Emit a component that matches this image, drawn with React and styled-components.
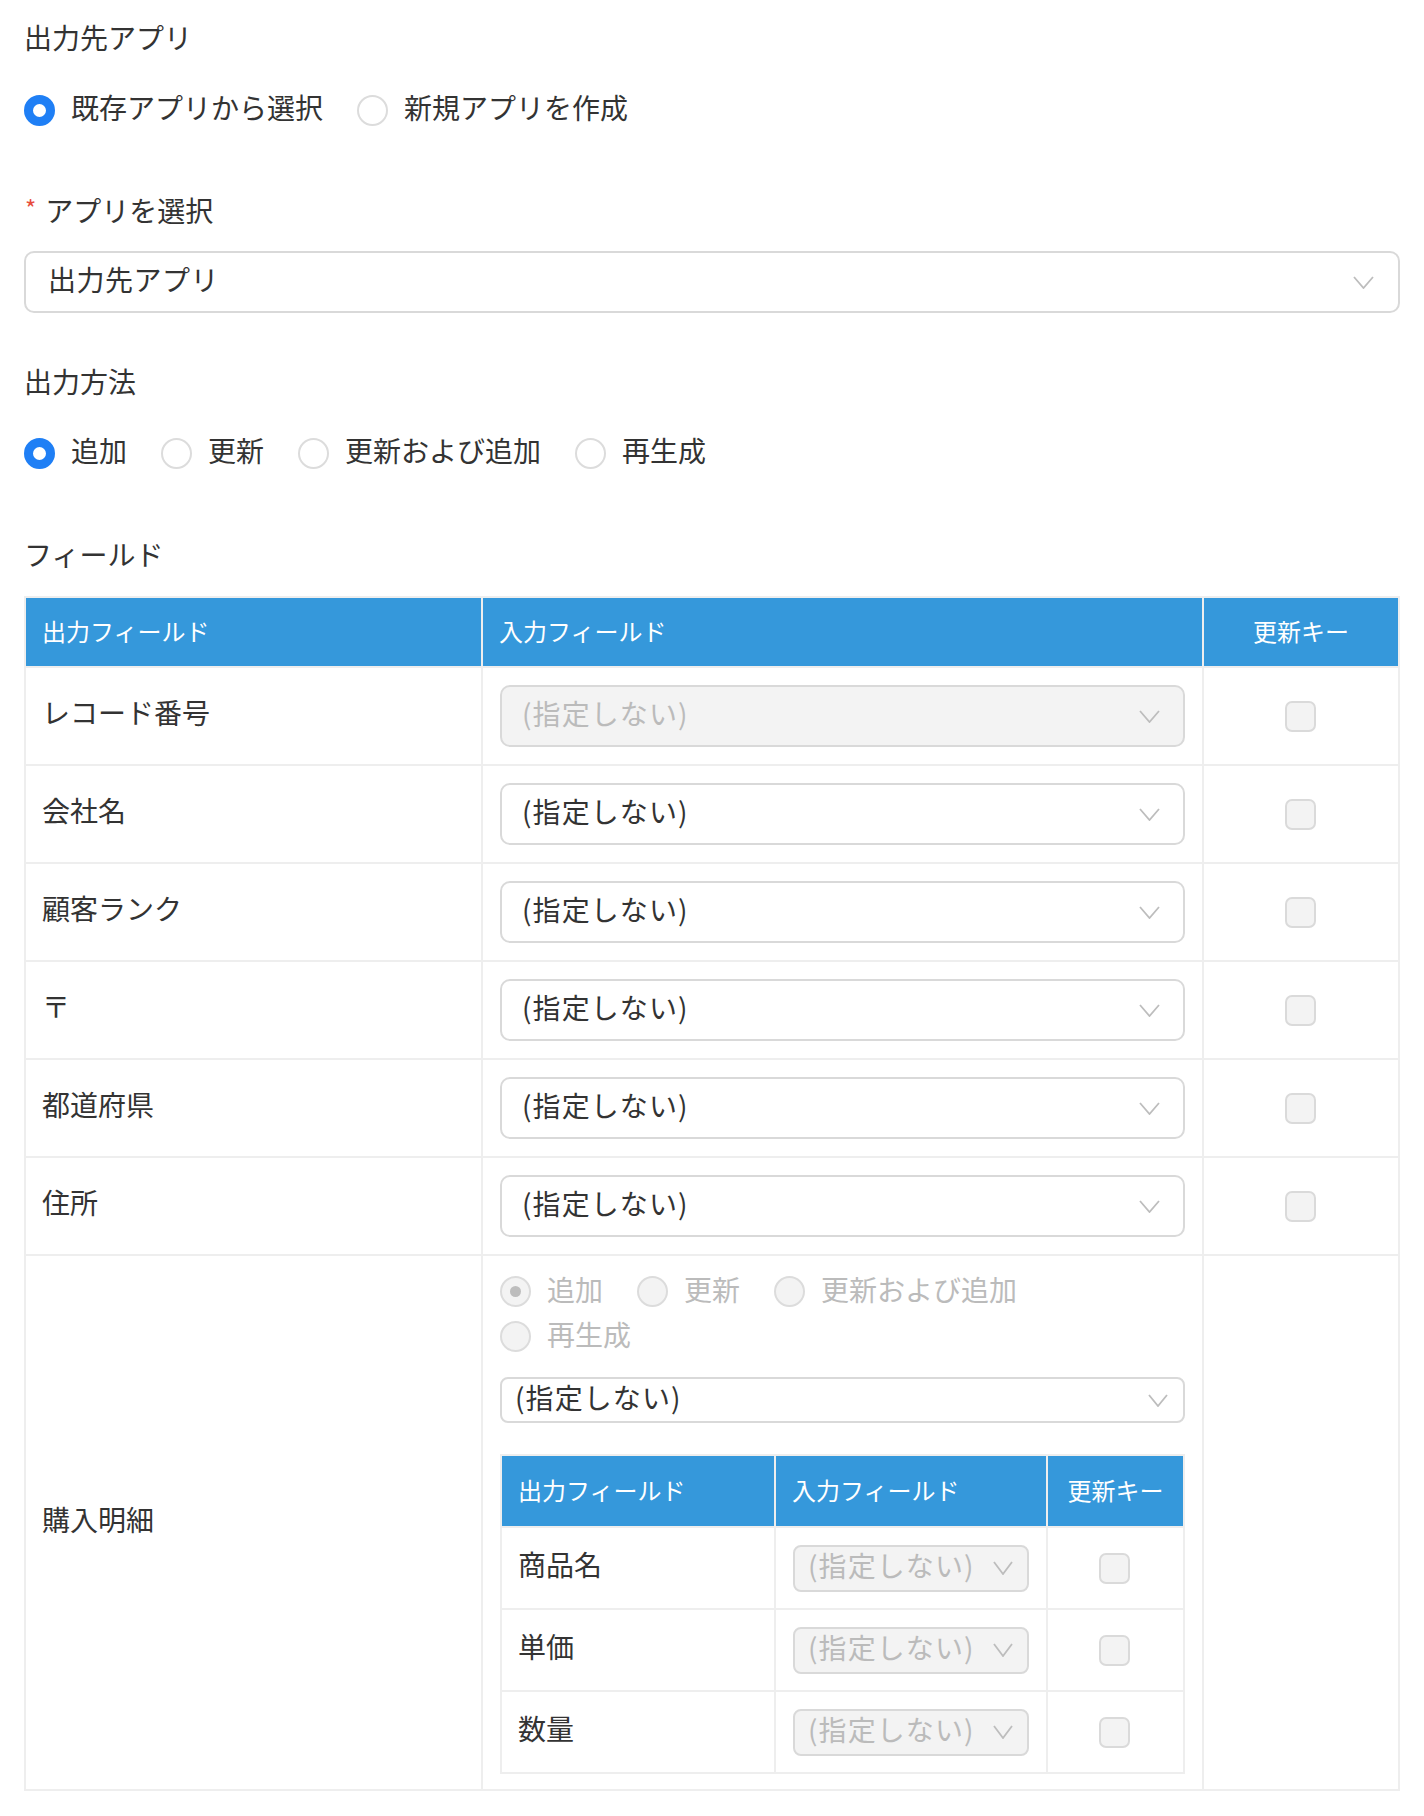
import React from 'react';
import styled, { createGlobalStyle } from 'styled-components';

const GlobalStyle = createGlobalStyle`
  body {
    margin: 0;
    background: #fff;
    color: #333;
    font-family: "Noto Sans CJK JP", "Noto Sans", sans-serif;
  }
  * {
    box-sizing: border-box;
  }
`;

const Page = styled.div`
  padding: 17px 24px 24px;
`;

const Section = styled.section`
  margin-bottom: ${p => p.$gap || 0}px;
`;

const Label = styled.div`
  display: flex;
  align-items: center;
  height: 40px;
  font-size: 28px;
  color: #333;
`;

const Required = styled.span`
  color: #e74c3c;
  font-size: 24px;
  line-height: 1;
  margin: 0 9px 0 1px;
  padding-bottom: 4px;
`;

const RadioGroup = styled.div`
  display: flex;
  flex-wrap: wrap;
  column-gap: 34px;
  row-gap: 14px;
  margin-top: ${p => p.$top || 0}px;
  max-width: ${p => p.$max || 'none'};
`;

const RadioItem = styled.label`
  display: flex;
  align-items: center;
  gap: 16px;
  height: ${p => (p.$disabled ? 31 : 40)}px;
  font-size: 28px;
  color: ${p => (p.$disabled ? '#bbb' : '#333')};
`;

const RadioText = styled.span`
  margin-bottom: 6px;
  white-space: nowrap;
`;

const RadioCircle = styled.span`
  position: relative;
  flex: none;
  width: 31px;
  height: 31px;
  border-radius: 50%;
  background: ${p => (p.$disabled ? '#f3f3f3' : '#fff')};
  border: ${p => (p.$checked && !p.$disabled ? '9px solid #1f7ff5' : '2px solid #dcdcdc')};

  &::after {
    content: '';
    display: ${p => (p.$checked && p.$disabled ? 'block' : 'none')};
    position: absolute;
    left: 50%;
    top: 50%;
    width: 11px;
    height: 11px;
    margin: -5.5px 0 0 -5.5px;
    border-radius: 50%;
    background: #bdbdbd;
  }
`;

const SelectBox = styled.div`
  display: flex;
  align-items: center;
  justify-content: space-between;
  width: 100%;
  height: ${p => p.$h}px;
  margin-top: ${p => p.$top || 0}px;
  padding: 0 ${p => p.$padR}px 0 ${p => p.$padL}px;
  border: 2px solid #d9d9d9;
  border-radius: ${p => p.$radius}px;
  background: ${p => (p.$disabled ? '#f3f3f3' : '#fff')};
  color: ${p => (p.$disabled ? '#bbb' : '#333')};
  font-size: 28px;
  white-space: nowrap;
`;

const SelectText = styled.span`
  margin-bottom: 7px;
  letter-spacing: ${p => p.$spacing}px;
`;

const Grid = styled.div`
  display: grid;
  grid-template-columns: ${p => p.$cols};
  gap: 2px;
  padding: 2px;
  background: #eeeeee;
  margin-top: ${p => p.$top || 0}px;
`;

const HeadCell = styled.div`
  display: flex;
  align-items: center;
  justify-content: ${p => (p.$center ? 'center' : 'flex-start')};
  height: ${p => p.$h}px;
  padding: 0 ${p => (p.$center ? 0 : 16)}px 4px;
  background: #3598db;
  color: #fff;
  font-size: 24px;
`;

const NameCell = styled.div`
  display: flex;
  align-items: center;
  min-height: ${p => p.$h}px;
  padding: 0 16px 8px;
  background: #fff;
  font-size: 28px;
  color: #333;
`;

const InputCell = styled.div`
  display: flex;
  align-items: center;
  min-height: ${p => p.$h}px;
  padding: 0 17px;
  background: #fff;
`;

const KeyCell = styled.div`
  display: flex;
  align-items: center;
  justify-content: center;
  min-height: ${p => p.$h}px;
  padding-right: 2px;
  background: #fff;
`;

const SubformCell = styled.div`
  padding: 20px 17px 15px;
  background: #fff;
`;

const Checkbox = styled.span`
  width: 31px;
  height: 31px;
  border-radius: 7px;
  border: 2px solid #dadada;
  background: #f3f3f3;
`;

const Chevron = ({ w = 21, h = 13 }) => (
  <svg width={w} height={h} viewBox={`0 0 ${w} ${h}`} fill="none">
    <polyline
      points={`1,1 ${w / 2},${h - 1} ${w - 1},1`}
      stroke="#bdbdbd"
      strokeWidth="1.8"
    />
  </svg>
);

const Select = ({ value = '(指定しない)', disabled, h = 62, radius = 10, padL = 20, padR = 23, top, chevW, chevH }) => (
  <SelectBox $h={h} $radius={radius} $padL={padL} $padR={padR} $top={top} $disabled={disabled}>
    <SelectText $spacing={value.startsWith('(') ? 1.1 : 0.5}>{value}</SelectText>
    <Chevron w={chevW} h={chevH} />
  </SelectBox>
);

const Radios = ({ options, checked, disabled, top, max }) => (
  <RadioGroup $top={top} $max={max}>
    {options.map(o => (
      <RadioItem key={o} $disabled={disabled}>
        <RadioCircle $checked={o === checked} $disabled={disabled} />
        <RadioText>{o}</RadioText>
      </RadioItem>
    ))}
  </RadioGroup>
);

const methods = ['追加', '更新', '更新および追加', '再生成'];
const fields = [
  { name: 'レコード番号', disabled: true },
  { name: '会社名' },
  { name: '顧客ランク' },
  { name: '〒' },
  { name: '都道府県' },
  { name: '住所' },
];
const subFields = ['商品名', '単価', '数量'];

const App = () => (
  <Page>
    <GlobalStyle />
    <Section $gap={60}>
      <Label>出力先アプリ</Label>
      <Radios options={['既存アプリから選択', '新規アプリを作成']} checked="既存アプリから選択" top={33} />
    </Section>

    <Section $gap={48}>
      <Label>
        <Required>*</Required>
        アプリを選択
      </Label>
      <Select value="出力先アプリ" top={21} padL={22} padR={24} />
    </Section>

    <Section $gap={61}>
      <Label>出力方法</Label>
      <Radios options={methods} checked="追加" top={32} />
    </Section>

    <Section>
      <Label>フィールド</Label>
      <Grid $cols="455px 1fr 194px" $top={22}>
        <HeadCell $h={68}>出力フィールド</HeadCell>
        <HeadCell $h={68}>入力フィールド</HeadCell>
        <HeadCell $h={68} $center>更新キー</HeadCell>

        {fields.map(f => (
          <React.Fragment key={f.name}>
            <NameCell $h={96}>{f.name}</NameCell>
            <InputCell $h={96}>
              <Select disabled={f.disabled} />
            </InputCell>
            <KeyCell $h={96}>
              <Checkbox />
            </KeyCell>
          </React.Fragment>
        ))}

        <NameCell>購入明細</NameCell>
        <SubformCell>
          <Radios options={methods} checked="追加" disabled max="600px" />
          <Select h={46} radius={8} padL={13} padR={15} top={25} chevW={20} chevH={13} />
          <Grid $cols="272px 270px 1fr" $top={31}>
            <HeadCell $h={70}>出力フィールド</HeadCell>
            <HeadCell $h={70}>入力フィールド</HeadCell>
            <HeadCell $h={70} $center>更新キー</HeadCell>
            {subFields.map(name => (
              <React.Fragment key={name}>
                <NameCell $h={80}>{name}</NameCell>
                <InputCell $h={80}>
                  <Select disabled h={47} radius={8} padL={13} padR={14} chevW={20} chevH={14} />
                </InputCell>
                <KeyCell $h={80}>
                  <Checkbox />
                </KeyCell>
              </React.Fragment>
            ))}
          </Grid>
        </SubformCell>
        <KeyCell />
      </Grid>
    </Section>
  </Page>
);

export default App;
